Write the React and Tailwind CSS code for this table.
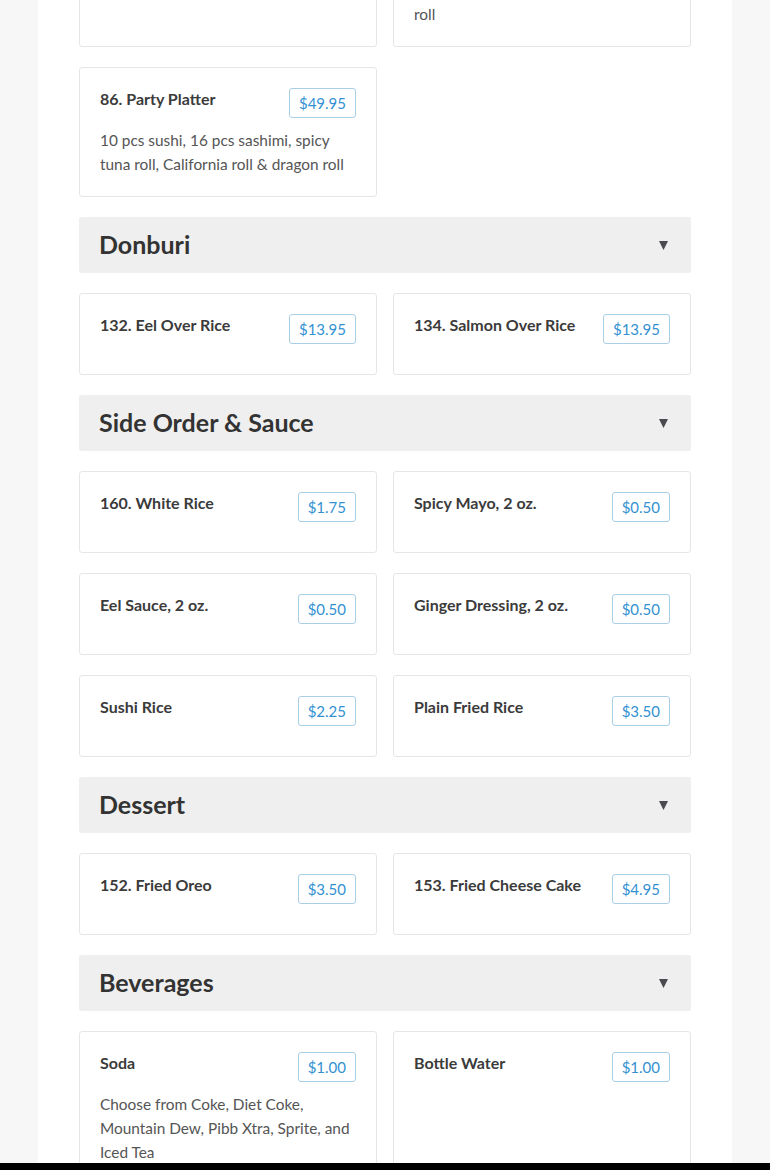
import React from "react";

const sections = [
  {
    title: null,
    items: [
      {
        name: "85. Sushi & Sashimi for Two",
        price: "$39.95",
        desc: "",
      },
      {
        name: "84. Sashimi Deluxe",
        price: "$29.95",
        desc: "18 pcs sashimi, spicy tuna roll, crunchy shrimp roll & spicy yellowtail roll",
      },
      {
        name: "86. Party Platter",
        price: "$49.95",
        desc: "10 pcs sushi, 16 pcs sashimi, spicy tuna roll, California roll & dragon roll",
      },
    ],
  },
  {
    title: "Donburi",
    items: [
      { name: "132. Eel Over Rice", price: "$13.95" },
      { name: "134. Salmon Over Rice", price: "$13.95" },
    ],
  },
  {
    title: "Side Order & Sauce",
    items: [
      { name: "160. White Rice", price: "$1.75" },
      { name: "Spicy Mayo, 2 oz.", price: "$0.50" },
      { name: "Eel Sauce, 2 oz.", price: "$0.50" },
      { name: "Ginger Dressing, 2 oz.", price: "$0.50" },
      { name: "Sushi Rice", price: "$2.25" },
      { name: "Plain Fried Rice", price: "$3.50" },
    ],
  },
  {
    title: "Dessert",
    items: [
      { name: "152. Fried Oreo", price: "$3.50" },
      { name: "153. Fried Cheese Cake", price: "$4.95" },
    ],
  },
  {
    title: "Beverages",
    items: [
      {
        name: "Soda",
        price: "$1.00",
        desc: "Choose from Coke, Diet Coke, Mountain Dew, Pibb Xtra, Sprite, and Iced Tea",
      },
      { name: "Bottle Water", price: "$1.00" },
    ],
  },
];

// single menu item card
const ItemCard = ({ item }) => (
  <div className="bg-white border border-[#e6e6e6] rounded-[3px] p-5">
    <div className="flex items-start justify-between gap-3">
      <p className="text-[16px] leading-[22px] font-bold text-[#3b3b3b]">
        {item.name}
      </p>
      <span className="shrink-0 h-[30px] px-[9px] flex items-center border border-[#a9cfe6] rounded-[3px] text-[15px] text-[#3391d2]">
        {item.price}
      </span>
    </div>
    <p className="mt-[10px] text-[15.4px] leading-[24px] text-[#555555]">
      {item.desc}
    </p>
  </div>
);

const CategoryHeader = ({ title }) => (
  <div className="h-[56px] bg-[#efefef] rounded-[2px] flex items-center justify-between pl-5 pr-[23px]">
    <h2 className="text-[25px] font-bold text-[#333333]">{title}</h2>
    <svg width="9" height="9" viewBox="0 0 9 9">
      <path d="M0 0 H9 L4.5 9 Z" fill="#4a4a4f" />
    </svg>
  </div>
);

export default function App() {
  return (
    <div className="h-[1170px] overflow-hidden flex flex-col bg-[#f7f7f7] font-['Lato',sans-serif]">
      <div className="flex-1 overflow-hidden">
        <div className="mx-auto w-[694px] bg-white px-[41px] pb-10">
          <div className="-mt-[107px] flex flex-col gap-5">
            {sections.map((section, i) => (
              <React.Fragment key={i}>
                {section.title && <CategoryHeader title={section.title} />}
                <div className="grid grid-cols-2 gap-x-4 gap-y-5">
                  {section.items.map((item) => (
                    <ItemCard key={item.name} item={item} />
                  ))}
                </div>
              </React.Fragment>
            ))}
          </div>
        </div>
      </div>
      <div className="h-[7px] shrink-0 bg-black" />
    </div>
  );
}
